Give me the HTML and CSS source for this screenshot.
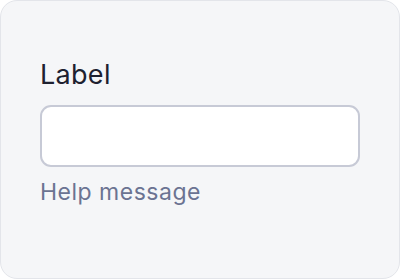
FILE: index.html
```html
<!DOCTYPE html>
<html>
<head>
<meta charset="utf-8">
<link rel="stylesheet" href="styles.css">
</head>
<body>
<div class="card">
  <label class="field-label" for="f">Label</label>
  <input class="field-input" id="f" type="text">
  <div class="field-help">Help message</div>
</div>
</body>
</html>
```
FILE: styles.css
```css
html, body {
  margin: 0;
  padding: 0;
  background: #ffffff;
}
.card {
  box-sizing: border-box;
  width: 400px;
  height: 279px;
  background: #f5f6f8;
  border: 1px solid #e3e5ea;
  border-radius: 17px;
  padding: 58px 39px 0 39px;
  display: flex;
  flex-direction: column;
  align-items: flex-start;
  font-family: Inter, "Noto Sans", sans-serif;
}
.field-label {
  font-size: 27px;
  line-height: 32px;
  letter-spacing: 0.3px;
  color: #1e2130;
  margin-bottom: 14px;
}
.field-input {
  box-sizing: border-box;
  width: 320px;
  height: 62px;
  border: 2px solid #c7cad6;
  border-radius: 11px;
  background: #ffffff;
  outline: none;
  margin: 0;
  padding: 0 14px;
  font: inherit;
}
.field-help {
  margin-top: 11px;
  font-size: 23px;
  line-height: 28px;
  letter-spacing: 0.5px;
  color: #6b7392;
}
```
